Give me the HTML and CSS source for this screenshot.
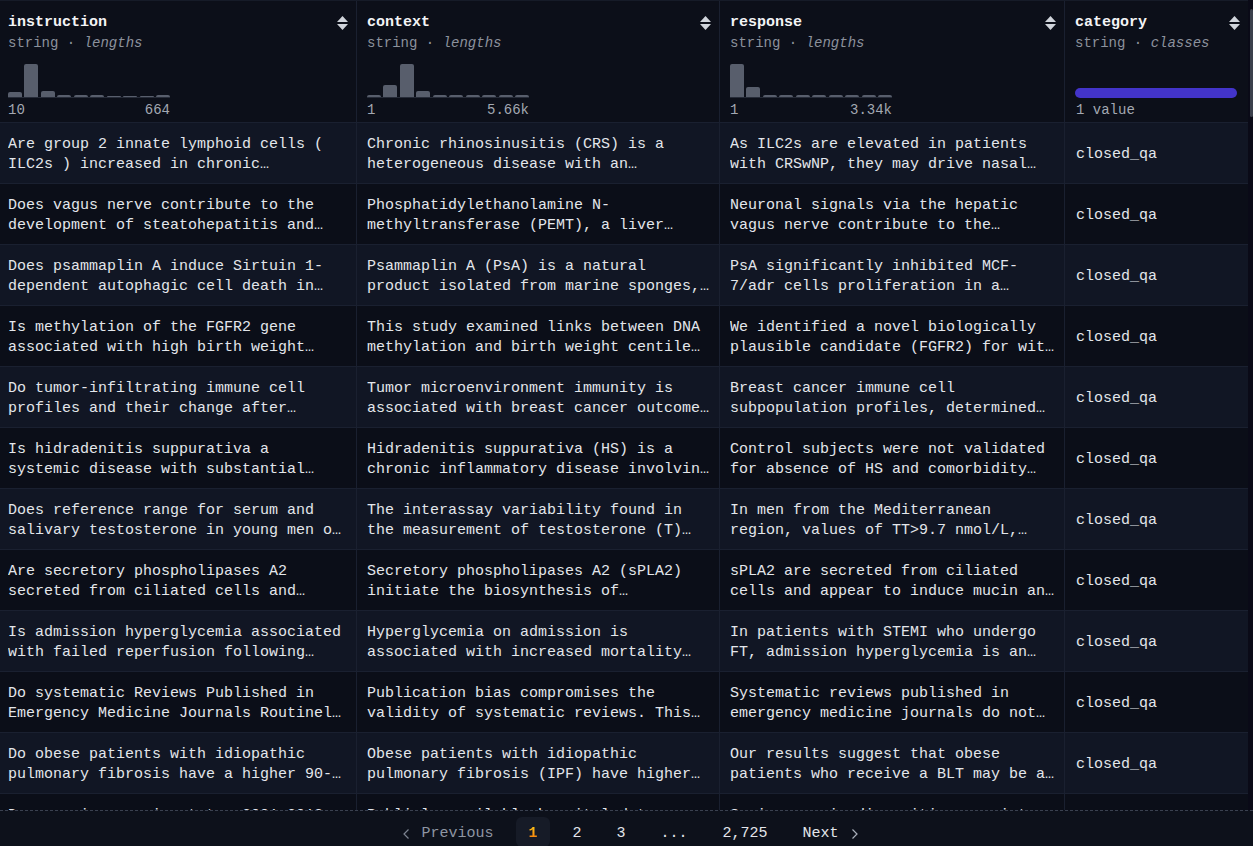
FILE: index.html
```html
<!DOCTYPE html>
<html lang="en">
<head>
<meta charset="utf-8">
<title>Dataset viewer</title>
<link rel="stylesheet" href="styles.css">
</head>
<body>
<div class="app">
  <div class="viewport">
    <div class="table">
      <div class="row head">
        <div class="cell hcell">
          <div class="htop"><span class="name">instruction</span><svg class="sort" viewBox="0 0 11 14" width="11" height="14"><polygon points="5.5,0 11,6 0,6"/><polygon points="0,8 11,8 5.5,14"/></svg></div>
          <div class="type">string · <em>lengths</em></div>
          <div class="hist">
            <span class="bar" style="height:5px"></span><span class="bar" style="height:33px"></span><span class="bar" style="height:6px"></span><span class="bar" style="height:2px"></span><span class="bar" style="height:2px"></span><span class="bar" style="height:2px"></span><span class="bar" style="height:1px"></span><span class="bar" style="height:1px"></span><span class="bar" style="height:1px"></span><span class="bar" style="height:2px"></span>
          </div>
          <div class="range"><span>10</span><span>664</span></div>
        </div>
        <div class="cell hcell">
          <div class="htop"><span class="name">context</span><svg class="sort" viewBox="0 0 11 14" width="11" height="14"><polygon points="5.5,0 11,6 0,6"/><polygon points="0,8 11,8 5.5,14"/></svg></div>
          <div class="type">string · <em>lengths</em></div>
          <div class="hist">
            <span class="bar" style="height:2px"></span><span class="bar" style="height:12px"></span><span class="bar" style="height:33px"></span><span class="bar" style="height:6px"></span><span class="bar" style="height:2px"></span><span class="bar" style="height:2px"></span><span class="bar" style="height:2px"></span><span class="bar" style="height:2px"></span><span class="bar" style="height:2px"></span><span class="bar" style="height:2px"></span>
          </div>
          <div class="range"><span>1</span><span>5.66k</span></div>
        </div>
        <div class="cell hcell">
          <div class="htop"><span class="name">response</span><svg class="sort" viewBox="0 0 11 14" width="11" height="14"><polygon points="5.5,0 11,6 0,6"/><polygon points="0,8 11,8 5.5,14"/></svg></div>
          <div class="type">string · <em>lengths</em></div>
          <div class="hist">
            <span class="bar" style="height:33px"></span><span class="bar" style="height:10px"></span><span class="bar" style="height:2px"></span><span class="bar" style="height:2px"></span><span class="bar" style="height:2px"></span><span class="bar" style="height:2px"></span><span class="bar" style="height:2px"></span><span class="bar" style="height:2px"></span><span class="bar" style="height:2px"></span><span class="bar" style="height:2px"></span>
          </div>
          <div class="range"><span>1</span><span>3.34k</span></div>
        </div>
        <div class="cell hcell">
          <div class="htop"><span class="name">category</span><svg class="sort" viewBox="0 0 11 14" width="11" height="14"><polygon points="5.5,0 11,6 0,6"/><polygon points="0,8 11,8 5.5,14"/></svg></div>
          <div class="type">string · <em>classes</em></div>
          <div class="classes"><span class="classbar"></span></div>
          <div class="range"><span>1 value</span></div>
        </div>
      </div>

      <div class="row odd">
        <div class="cell"><span class="l">Are group 2 innate lymphoid cells (</span><span class="l">ILC2s ) increased in chronic…</span></div>
        <div class="cell"><span class="l">Chronic rhinosinusitis (CRS) is a</span><span class="l">heterogeneous disease with an…</span></div>
        <div class="cell"><span class="l">As ILC2s are elevated in patients</span><span class="l">with CRSwNP, they may drive nasal…</span></div>
        <div class="cell cat">closed_qa</div>
      </div>
      <div class="row">
        <div class="cell"><span class="l">Does vagus nerve contribute to the</span><span class="l">development of steatohepatitis and…</span></div>
        <div class="cell"><span class="l">Phosphatidylethanolamine N-</span><span class="l">methyltransferase (PEMT), a liver…</span></div>
        <div class="cell"><span class="l">Neuronal signals via the hepatic</span><span class="l">vagus nerve contribute to the…</span></div>
        <div class="cell cat">closed_qa</div>
      </div>
      <div class="row odd">
        <div class="cell"><span class="l">Does psammaplin A induce Sirtuin 1-</span><span class="l">dependent autophagic cell death in…</span></div>
        <div class="cell"><span class="l">Psammaplin A (PsA) is a natural</span><span class="l">product isolated from marine sponges,…</span></div>
        <div class="cell"><span class="l">PsA significantly inhibited MCF-</span><span class="l">7/adr cells proliferation in a…</span></div>
        <div class="cell cat">closed_qa</div>
      </div>
      <div class="row">
        <div class="cell"><span class="l">Is methylation of the FGFR2 gene</span><span class="l">associated with high birth weight…</span></div>
        <div class="cell"><span class="l">This study examined links between DNA</span><span class="l">methylation and birth weight centile…</span></div>
        <div class="cell"><span class="l">We identified a novel biologically</span><span class="l">plausible candidate (FGFR2) for wit…</span></div>
        <div class="cell cat">closed_qa</div>
      </div>
      <div class="row odd">
        <div class="cell"><span class="l">Do tumor-infiltrating immune cell</span><span class="l">profiles and their change after…</span></div>
        <div class="cell"><span class="l">Tumor microenvironment immunity is</span><span class="l">associated with breast cancer outcome…</span></div>
        <div class="cell"><span class="l">Breast cancer immune cell</span><span class="l">subpopulation profiles, determined…</span></div>
        <div class="cell cat">closed_qa</div>
      </div>
      <div class="row">
        <div class="cell"><span class="l">Is hidradenitis suppurativa a</span><span class="l">systemic disease with substantial…</span></div>
        <div class="cell"><span class="l">Hidradenitis suppurativa (HS) is a</span><span class="l">chronic inflammatory disease involvin…</span></div>
        <div class="cell"><span class="l">Control subjects were not validated</span><span class="l">for absence of HS and comorbidity…</span></div>
        <div class="cell cat">closed_qa</div>
      </div>
      <div class="row odd">
        <div class="cell"><span class="l">Does reference range for serum and</span><span class="l">salivary testosterone in young men o…</span></div>
        <div class="cell"><span class="l">The interassay variability found in</span><span class="l">the measurement of testosterone (T)…</span></div>
        <div class="cell"><span class="l">In men from the Mediterranean</span><span class="l">region, values of TT&gt;9.7 nmol/L,…</span></div>
        <div class="cell cat">closed_qa</div>
      </div>
      <div class="row">
        <div class="cell"><span class="l">Are secretory phospholipases A2</span><span class="l">secreted from ciliated cells and…</span></div>
        <div class="cell"><span class="l">Secretory phospholipases A2 (sPLA2)</span><span class="l">initiate the biosynthesis of…</span></div>
        <div class="cell"><span class="l">sPLA2 are secreted from ciliated</span><span class="l">cells and appear to induce mucin an…</span></div>
        <div class="cell cat">closed_qa</div>
      </div>
      <div class="row odd">
        <div class="cell"><span class="l">Is admission hyperglycemia associated</span><span class="l">with failed reperfusion following…</span></div>
        <div class="cell"><span class="l">Hyperglycemia on admission is</span><span class="l">associated with increased mortality…</span></div>
        <div class="cell"><span class="l">In patients with STEMI who undergo</span><span class="l">FT, admission hyperglycemia is an…</span></div>
        <div class="cell cat">closed_qa</div>
      </div>
      <div class="row">
        <div class="cell"><span class="l">Do systematic Reviews Published in</span><span class="l">Emergency Medicine Journals Routinel…</span></div>
        <div class="cell"><span class="l">Publication bias compromises the</span><span class="l">validity of systematic reviews. This…</span></div>
        <div class="cell"><span class="l">Systematic reviews published in</span><span class="l">emergency medicine journals do not…</span></div>
        <div class="cell cat">closed_qa</div>
      </div>
      <div class="row odd">
        <div class="cell"><span class="l">Do obese patients with idiopathic</span><span class="l">pulmonary fibrosis have a higher 90-…</span></div>
        <div class="cell"><span class="l">Obese patients with idiopathic</span><span class="l">pulmonary fibrosis (IPF) have higher…</span></div>
        <div class="cell"><span class="l">Our results suggest that obese</span><span class="l">patients who receive a BLT may be a…</span></div>
        <div class="cell cat">closed_qa</div>
      </div>
      <div class="row">
        <div class="cell"><span class="l">Does socioeconomic status 2001-2013</span><span class="l">predict outcome in pediatric…</span></div>
        <div class="cell"><span class="l">Publicly available hospital data</span><span class="l">were analysed to determine…</span></div>
        <div class="cell"><span class="l">Socioeconomic disparities persist</span><span class="l">in children undergoing surgery…</span></div>
        <div class="cell cat">closed_qa</div>
      </div>
    </div>
    <div class="scrollbar"><div class="thumb"></div></div>
  </div>

  <nav class="pager">
    <span class="pg prev"><svg class="chev" viewBox="0 0 6 10" width="6" height="10"><path d="M5.5 0.5 L1 5 L5.5 9.5"/></svg>Previous</span>
    <span class="pg active"><span class="num">1</span></span>
    <span class="pg">2</span>
    <span class="pg">3</span>
    <span class="pg">...</span>
    <span class="pg">2,725</span>
    <span class="pg next">Next<svg class="chev" viewBox="0 0 6 10" width="6" height="10"><path d="M0.5 0.5 L5 5 L0.5 9.5"/></svg></span>
  </nav>
</div>
</body>
</html>
```

FILE: styles.css
```css
* { box-sizing: border-box; }

html, body {
  margin: 0;
  padding: 0;
  background: #0b0f19;
}

body {
  font-family: "Liberation Mono", "DejaVu Sans Mono", monospace;
  font-size: 15px;
  color: #e3e6eb;
}

.app {
  width: 1253px;
  height: 846px;
  display: flex;
  flex-direction: column;
  overflow: hidden;
}

.viewport {
  height: 810px;
  display: flex;
  flex: none;
}

.table {
  flex: 1;
  overflow: hidden;
}

.row {
  display: grid;
  grid-template-columns: 357px 363px 345px 1fr;
  background: #0b0e18;
  border-bottom: 1px solid #1a2030;
}

.row.odd {
  background: #111624;
}

.cell {
  border-right: 1px solid #1a2030;
  padding: 12px 8px 8px 10px;
  line-height: 20px;
  min-width: 0;
}

.cell:first-child {
  padding-left: 8px;
}

.cell:last-child {
  border-right: none;
  padding-left: 11px;
}

.l {
  display: block;
  white-space: nowrap;
  overflow: hidden;
}

.cat {
  display: flex;
  align-items: center;
}

/* header */
.row.head {
  background: #0c0f19;
  border-top: 1px solid #161b28;
}

.hcell {
  padding-top: 11px;
  padding-bottom: 3px;
}

.hcell:last-child {
  padding-left: 10px;
}

.htop {
  display: flex;
  align-items: center;
  justify-content: space-between;
  height: 21px;
}

.name {
  font-weight: bold;
  color: #f3f4f6;
  line-height: 21px;
}

.sort {
  fill: #d0d4db;
  flex: none;
  margin-top: 1px;
}

.type {
  font-size: 14px;
  line-height: 20px;
  color: #8c929d;
}

.type em {
  font-style: italic;
}

.hist {
  margin-top: 11px;
  width: 162px;
  height: 34px;
  display: flex;
  align-items: flex-end;
  gap: 2.5px;
  border-bottom: 1px solid #262b38;
}

.bar {
  flex: 1;
  background: #585e6c;
  border-radius: 2px 2px 0 0;
}

.classes {
  margin-top: 11px;
  height: 34px;
  display: flex;
  align-items: flex-end;
  padding-bottom: 0;
}

.classbar {
  display: block;
  width: 162px;
  height: 10px;
  border-radius: 5px;
  background: #4334ca;
}

.range {
  margin-top: 3px;
  width: 162px;
  display: flex;
  justify-content: space-between;
  font-size: 14px;
  line-height: 18px;
  color: #a3a8b2;
}

.hcell:last-child .range {
  padding-left: 1px;
}

/* scrollbar */
.scrollbar {
  width: 5px;
  flex: none;
  background: #0a0a17;
  padding-top: 9px;
  display: flex;
  justify-content: flex-end;
}

.thumb {
  width: 3px;
  height: 108px;
  background: #3b404c;
  border-radius: 2px;
}

/* pagination */
.pager {
  flex: 1;
  border-top: 1px dashed #3a4150;
  background: #0d111b;
  display: flex;
  justify-content: center;
  align-items: flex-start;
  gap: 10px;
  padding-top: 6px;
  padding-left: 8px;
}

.pg {
  height: 30px;
  line-height: 26px;
  padding: 4px 12.5px 0;
  color: #e3e6eb;
  display: flex;
  align-items: center;
  gap: 12px;
  border-radius: 6px;
}

.pg.prev {
  color: #8f96a3;
}

.pg.next {
  gap: 13px;
}

.chev {
  fill: none;
  stroke: currentColor;
  stroke-width: 1.2;
}

.pg.prev .chev {
  stroke: #7d8491;
}

.pg.next .chev {
  stroke: #aab0bb;
}

.pg.active {
  background: #161b27;
}

.num {
  font-weight: bold;
  background: linear-gradient(to bottom, #fcc419 20%, #f76707 85%);
  -webkit-background-clip: text;
  background-clip: text;
  color: transparent;
}
```
